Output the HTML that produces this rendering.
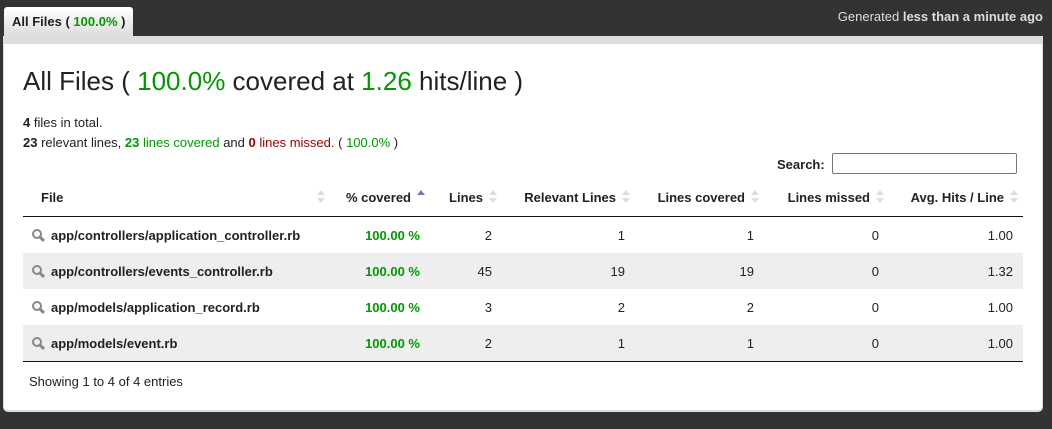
<!DOCTYPE html>
<html><head><style>
body{margin:0;background:#333;font-family:"Liberation Sans",sans-serif;font-size:13px;color:#222;width:1052px;height:429px;position:relative;overflow:hidden}
.tab{position:absolute;left:4px;top:7px;width:129px;height:29px;background:linear-gradient(#fff,#ddd);border-radius:3px 3px 0 0;font-weight:bold;font-size:13px;line-height:29px;text-indent:8px}
.g{color:#090}.r{color:#900}
.gen{position:absolute;right:9px;top:9px;color:#ddd;font-size:13px}
.box{position:absolute;left:3px;top:36px;width:1040px;height:376px;background:#ddd;border-radius:0 0 5px 5px}
.in{position:absolute;left:1px;top:8px;right:1px;bottom:2px;background:#fff;border-radius:0 0 4px 4px}
h2{position:absolute;left:19px;top:22px;margin:0;font-weight:normal;font-size:26px;}
.p{position:absolute;left:19px;font-size:13px}
.sl{position:absolute;left:773px;top:113px;font-weight:bold}
.si{position:absolute;left:828px;top:109px;width:183px;height:19px;border:1px solid #777;border-radius:2px}
table{position:absolute;left:19px;top:135px;width:1000px;border-collapse:collapse;table-layout:fixed}
th{height:37px;font-weight:bold;text-align:right;padding:0 19px 0 0;border-bottom:1px solid #111;position:relative}
th:first-child{text-align:left;padding-left:18px}
th i{position:absolute;right:5px;top:11px;width:8px;height:14px;font-style:normal}
th i:before{content:"";position:absolute;left:0;top:0;border:4px solid transparent;border-bottom:5px solid #ddd;border-top:0}
th i:after{content:"";position:absolute;left:0;top:8px;border:4px solid transparent;border-top:5px solid #ddd;border-bottom:0}
th i.up:before{border-bottom-color:#77b}th i.up:after{display:none}
td{height:36px;padding:0 10px 0 0;text-align:right}
td:first-child{text-align:left;font-weight:bold;padding-left:9px;white-space:nowrap}
tr.e td{background:#eee}
tbody tr:last-child td{border-bottom:1px solid #111}
.mg{display:inline-block;width:12px;height:12px;position:relative;margin-right:7px;vertical-align:-1px}
.mg:before{content:"";position:absolute;left:0;top:0;width:6px;height:6px;border:2px solid #888;border-radius:50%}
.mg:after{content:"";position:absolute;left:8px;top:6px;width:3px;height:7px;background:#888;transform:rotate(-45deg)}
.cov{color:#090;font-weight:bold}
.sh{position:absolute;left:25px;top:330px}
</style></head><body>
<div class="tab">All Files ( <span class="g">100.0%</span> )</div>
<div class="gen">Generated <b>less than a minute ago</b></div>
<div class="box"><div class="in">
<h2>All Files ( <span class="g">100.0%</span> covered at <span class="g">1.26</span> hits/line )</h2>
<div class="p" style="top:71px"><b>4</b> files in total.</div>
<div class="p" style="top:91px"><b>23</b> relevant lines, <span class="g"><b>23</b> lines covered</span> and <span class="r"><b>0</b> lines missed.</span> ( <span class="g">100.0%</span> )</div>
<div class="sl">Search:</div><div class="si"></div>
<table>
<colgroup><col style="width:307px"><col style="width:100px"><col style="width:72px"><col style="width:133px"><col style="width:129px"><col style="width:125px"><col style="width:134px"></colgroup>
<thead><tr><th>File<i></i></th><th>% covered<i class="up"></i></th><th>Lines<i></i></th><th>Relevant Lines<i></i></th><th>Lines covered<i></i></th><th>Lines missed<i></i></th><th>Avg. Hits / Line<i></i></th></tr></thead>
<tbody>
<tr><td><span class="mg"></span>app/controllers/application_controller.rb</td><td class="cov">100.00 %</td><td>2</td><td>1</td><td>1</td><td>0</td><td>1.00</td></tr>
<tr class="e"><td><span class="mg"></span>app/controllers/events_controller.rb</td><td class="cov">100.00 %</td><td>45</td><td>19</td><td>19</td><td>0</td><td>1.32</td></tr>
<tr><td><span class="mg"></span>app/models/application_record.rb</td><td class="cov">100.00 %</td><td>3</td><td>2</td><td>2</td><td>0</td><td>1.00</td></tr>
<tr class="e"><td><span class="mg"></span>app/models/event.rb</td><td class="cov">100.00 %</td><td>2</td><td>1</td><td>1</td><td>0</td><td>1.00</td></tr>
</tbody></table>
<div class="sh">Showing 1 to 4 of 4 entries</div>
</div></div>
</body></html>
